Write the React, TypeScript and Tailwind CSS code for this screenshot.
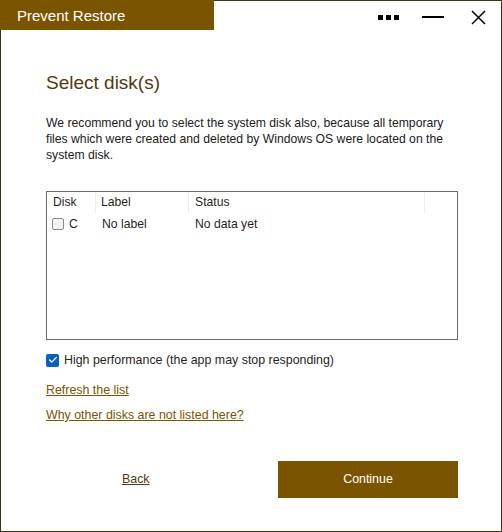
import { Check } from "lucide-react";

const cols = ["Disk", "Label", "Status"];

const App = (): JSX.Element => {
    return <div className="w-[502px] h-[532px] border border-[#3b3512] bg-white flex flex-col font-['Liberation_Sans',Arial,sans-serif] text-[#1f1f1f]">

        <div className="flex h-[30px] justify-between items-start">
            <div className="w-[214px] h-[30px] -mt-px -ml-px bg-[#7b5400] text-white text-[15px] pl-[17px] pt-[5px]">
                Prevent Restore
            </div>
            <div className="flex items-center h-[30px] pr-[15px] pt-[2px]">
                <div className="flex gap-[3px] mr-[23px]">
                    <span className="w-[5px] h-[5px] bg-black" />
                    <span className="w-[5px] h-[5px] bg-black" />
                    <span className="w-[5px] h-[5px] bg-black" />
                </div>
                <span className="w-[22px] h-[2px] bg-black mr-[27px]" />
                <svg width="15" height="15" viewBox="0 0 15 15" className="mt-[1px]">
                    <path d="M1 1 L14 14 M14 1 L1 14" stroke="#000" strokeWidth="1.5" />
                </svg>
            </div>
        </div>

        <div className="flex flex-col pl-[45px] pr-[43px]">
            <h1 className="text-[19px] text-[#553a0e] mt-[41px] leading-[22px]">Select disk(s)</h1>

            <p className="text-[12.2px] leading-[16px] mt-[21px] text-[#202020]">
                We recommend you to select the system disk also, because all temporary files which were created and deleted by Windows OS were located on the system disk.
            </p>

            <div className="mt-[28px] h-[149px] border border-[#6b6b6b] text-[12.2px]">
                <div className="flex h-[21px] items-center">
                    <div className="w-[49px] pl-[6px] border-r border-[#ececec] h-full flex items-center">{cols[0]}</div>
                    <div className="w-[93px] pl-[5px] border-r border-[#ececec] h-full flex items-center">{cols[1]}</div>
                    <div className="w-[236px] pl-[6px] border-r border-[#ececec] h-full flex items-center">{cols[2]}</div>
                </div>
                <div className="flex h-[23px] items-center">
                    <div className="w-[49px] pl-[5px] flex items-center gap-[5px]">
                        <span className="w-[12px] h-[12px] border border-[#8a8a8a] rounded-[2px] bg-[#f2f2f2]" />
                        C
                    </div>
                    <div className="w-[93px] pl-[6px]">No label</div>
                    <div className="pl-[6px]">No data yet</div>
                </div>
            </div>

            <div className="flex items-center mt-[11px] text-[12.4px] gap-[5px]">
                <span className="w-[13px] h-[13px] rounded-[2px] bg-[#0a5fc2] flex items-center justify-center">
                    <Check size={10} color="#fff" strokeWidth={3} />
                </span>
                High performance (the app may stop responding)
            </div>

            <a className="mt-[11px] text-[12.4px] text-[#7b5400] underline w-fit">Refresh the list</a>
            <a className="mt-[7px] text-[12.4px] text-[#7b5400] underline w-fit">Why other disks are not listed here?</a>

            <div className="flex items-center justify-between mt-[36px]">
                <a className="ml-[76px] text-[12.4px] text-[#553a0e] underline">Back</a>
                <button className="w-[180px] h-[37px] bg-[#7b5400] text-white text-[12.4px]">Continue</button>
            </div>
        </div>

    </div>
}

export default App
